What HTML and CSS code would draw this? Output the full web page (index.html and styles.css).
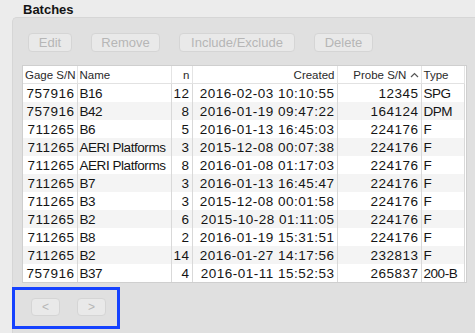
FILE: index.html
```html
<!DOCTYPE html>
<html lang="en">
<head>
    <meta charset="UTF-8">
    <title>Batches</title>
    <link rel="stylesheet" href="styles.css">
</head>
<body>
    <div class="title">Batches</div>
    <div class="group">
        <div class="toolbar">
            <button class="btn w-edit" disabled>Edit</button>
            <button class="btn w-remove" disabled>Remove</button>
            <button class="btn w-incl" disabled>Include/Exclude</button>
            <button class="btn w-delete" disabled>Delete</button>
        </div>
        <div class="table-wrap">
            <table class="batches">
                <colgroup>
                    <col class="c-gage"><col class="c-name"><col class="c-n"><col class="c-created"><col class="c-probe"><col class="c-type">
                </colgroup>
                <thead>
                    <tr>
                        <th>Gage S/N</th>
                        <th class="left">Name</th>
                        <th>n</th>
                        <th>Created</th>
                        <th>Probe S/N <svg class="sort" width="9" height="6" viewBox="0 0 9 6"><path d="M1 5 L4.5 1.5 L8 5" fill="none" stroke="#555" stroke-width="1.2"/></svg></th>
                        <th class="left">Type</th>
                    </tr>
                </thead>
                <tbody>
                    <tr><td class="num">757916</td><td class="left">B16</td><td class="num">12</td><td class="num">2016-02-03 10:10:55</td><td class="num">12345</td><td class="left">SPG</td></tr>
                    <tr><td class="num">757916</td><td class="left">B42</td><td class="num">8</td><td class="num">2016-01-19 09:47:22</td><td class="num">164124</td><td class="left">DPM</td></tr>
                    <tr><td class="num">711265</td><td class="left">B6</td><td class="num">5</td><td class="num">2016-01-13 16:45:03</td><td class="num">224176</td><td class="left">F</td></tr>
                    <tr><td class="num">711265</td><td class="left">AERI Platforms</td><td class="num">3</td><td class="num">2015-12-08 00:07:38</td><td class="num">224176</td><td class="left">F</td></tr>
                    <tr><td class="num">711265</td><td class="left">AERI Platforms</td><td class="num">8</td><td class="num">2016-01-08 01:17:03</td><td class="num">224176</td><td class="left">F</td></tr>
                    <tr><td class="num">711265</td><td class="left">B7</td><td class="num">3</td><td class="num">2016-01-13 16:45:47</td><td class="num">224176</td><td class="left">F</td></tr>
                    <tr><td class="num">711265</td><td class="left">B3</td><td class="num">3</td><td class="num">2015-12-08 00:01:58</td><td class="num">224176</td><td class="left">F</td></tr>
                    <tr><td class="num">711265</td><td class="left">B2</td><td class="num">6</td><td class="num">2015-10-28 01:11:05</td><td class="num">224176</td><td class="left">F</td></tr>
                    <tr><td class="num">711265</td><td class="left">B8</td><td class="num">2</td><td class="num">2016-01-19 15:31:51</td><td class="num">224176</td><td class="left">F</td></tr>
                    <tr><td class="num">711265</td><td class="left">B2</td><td class="num">14</td><td class="num">2016-01-27 14:17:56</td><td class="num">232813</td><td class="left">F</td></tr>
                    <tr><td class="num">757916</td><td class="left">B37</td><td class="num">4</td><td class="num">2016-01-11 15:52:53</td><td class="num">265837</td><td class="left">200-B</td></tr>
                </tbody>
            </table>
        </div>
        <div class="pager">
            <button class="btn page" disabled>&lt;</button>
            <button class="btn page" disabled>&gt;</button>
        </div>
    </div>
</body>
</html>
```

FILE: styles.css
```css
body {
    margin: 0;
    background-color: #ececec;
    font-family: 'Liberation Sans', Arial, sans-serif;
    color: #141414;
    width: 475px;
    height: 333px;
    overflow: hidden;
}
.title {
    font-weight: bold;
    font-size: 13px;
    padding: 2px 0 0 23px;
    height: 15px;
}
.group {
    margin-left: 12px;
    height: 316px;
    background: #e0e0e0;
    border: 1px solid #d6d6d6;
    border-right: none;
    border-bottom: none;
    border-top-left-radius: 5px;
    box-sizing: border-box;
    padding: 15px 0 0 9px;
}
.toolbar {
    display: flex;
    gap: 19px;
    padding-left: 6px;
    height: 19px;
}
.btn {
    font-family: 'Liberation Sans', Arial, sans-serif;
    font-size: 13px;
    color: #b6b6b6;
    background: #e9e9e9;
    border: 1px solid #d5d5d5;
    border-radius: 4px;
    height: 19px;
    padding: 0;
    box-sizing: border-box;
}
.w-edit { width: 44px; }
.w-remove { width: 69px; }
.w-incl { width: 116px; }
.w-delete { width: 59px; }
.table-wrap {
    margin-top: 13px;
    width: 445px;
    height: 218px;
    background: #fff;
    border: 1px solid #cfcfcf;
    box-sizing: border-box;
    overflow: hidden;
}
.batches {
    border-collapse: collapse;
    table-layout: fixed;
    width: 441px;
}
.c-gage { width: 54px; }
.c-name { width: 94px; }
.c-n { width: 21px; }
.c-created { width: 145px; }
.c-probe { width: 84px; }
.c-type { width: 43px; }
.batches th {
    font-weight: normal;
    font-size: 11.5px;
    color: #2a2a2a;
    height: 17px;
    padding: 0 2px;
    text-align: right;
    border-bottom: 1px solid #e2e2e2;
    border-right: 1px solid #e4e4e4;
    white-space: nowrap;
    overflow: hidden;
}
.batches td {
    font-size: 13.5px;
    letter-spacing: -0.45px;
    height: 18px;
    padding: 0 2px;
    text-align: right;
    border-right: 1px solid #d9d9d9;
    white-space: nowrap;
    overflow: hidden;
}
.batches td.num {
    letter-spacing: 0.5px;
    padding-right: 2px;
}
.batches th.left, .batches td.left {
    text-align: left;
}
.batches tbody tr:nth-child(even) {
    background: #f4f4f4;
}
.sort {
    vertical-align: 1px;
}
.pager {
    margin: 4px 0 0 -10px;
    width: 108px;
    height: 42px;
    border: 3px solid #1542ff;
    box-sizing: border-box;
    display: flex;
    gap: 17px;
    padding: 8px 0 0 16px;
}
.btn.page {
    width: 29px;
    height: 18px;
    font-size: 12px;
}
```
